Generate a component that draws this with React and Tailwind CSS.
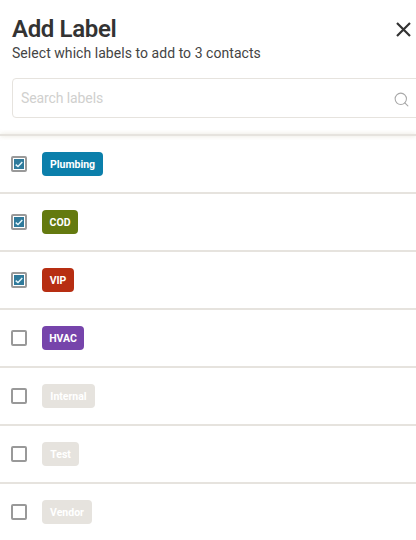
import React from "react";
import { Search } from "lucide-react";

const labels = [
  { name: "Plumbing", color: "bg-[#0b7fab]", width: "w-[61px]", checked: true },
  { name: "COD", color: "bg-[#647a0f]", width: "w-[36px]", checked: true },
  { name: "VIP", color: "bg-[#b72e12]", width: "w-[32px]", checked: true },
  { name: "HVAC", color: "bg-[#7644ab]", width: "w-[42px]", checked: false },
  { name: "Internal", color: "bg-[#e6e3de]", width: "w-[53px]", checked: false },
  { name: "Test", color: "bg-[#e6e3de]", width: "w-[37px]", checked: false },
  { name: "Vendor", color: "bg-[#e6e3de]", width: "w-[50px]", checked: false },
];

const Checkbox = ({ checked }) => (
  <div className="w-4 h-4 box-border border-2 border-[#999999] rounded-[2px] bg-white p-[1px]">
    {checked && (
      <div className="w-full h-full bg-[#2f7a9b] flex items-center justify-center">
        <svg width="8" height="7" viewBox="0 0 8 7" fill="none">
          <path d="M0.7 3.6 L3 5.6 L7.3 1" stroke="#e6f6fb" strokeWidth="1.4" />
        </svg>
      </div>
    )}
  </div>
);

const App = () => {
  return (
    <div className="w-[416px] h-[540px] overflow-hidden bg-white font-['Roboto',sans-serif]">
      <div className="pl-3 pt-[15px] h-[134px] relative">
        <div className="flex items-center justify-between pr-[4px]">
          <h1 className="text-[24px] leading-[28px] font-semibold text-[#333333] tracking-[-0.35px]">
            Add Label
          </h1>
          <svg width="15" height="15" viewBox="0 0 15 15" fill="none" className="mr-[1px]">
            <path d="M1 1 L14 14 M14 1 L1 14" stroke="#333333" strokeWidth="2.2" />
          </svg>
        </div>
        <p className="mt-[1px] text-[14px] leading-[18px] tracking-[0.05px] text-[#444444]">
          Select which labels to add to 3 contacts
        </p>
        <div className="mt-[16px] h-10 w-[420px] box-border border border-[#e6e3de] rounded-[4px] flex items-center pl-2">
          <span className="text-[14px] text-[#d0d0ce] tracking-[-0.1px]">Search labels</span>
          <Search className="absolute left-[393px] top-[91px] text-[#a8a8a8]" size={17} strokeWidth={1.5} />
        </div>
      </div>
      <div className="h-[2px] bg-[#e6e3de] shadow-[0_0_4px_rgba(190,185,150,0.45)]" />
      {labels.map((label) => (
        <div
          key={label.name}
          className="h-[58px] box-border border-b-2 border-[#e6e3de] flex items-center pl-[11px] gap-[15px]"
        >
          <Checkbox checked={label.checked} />
          <span
            className={`${label.color} ${label.width} h-6 rounded-[4px] pt-[2px] flex items-center justify-center text-[10.5px] font-bold text-white whitespace-nowrap`}
          >
            {label.name}
          </span>
        </div>
      ))}
    </div>
  );
};

export default App;
